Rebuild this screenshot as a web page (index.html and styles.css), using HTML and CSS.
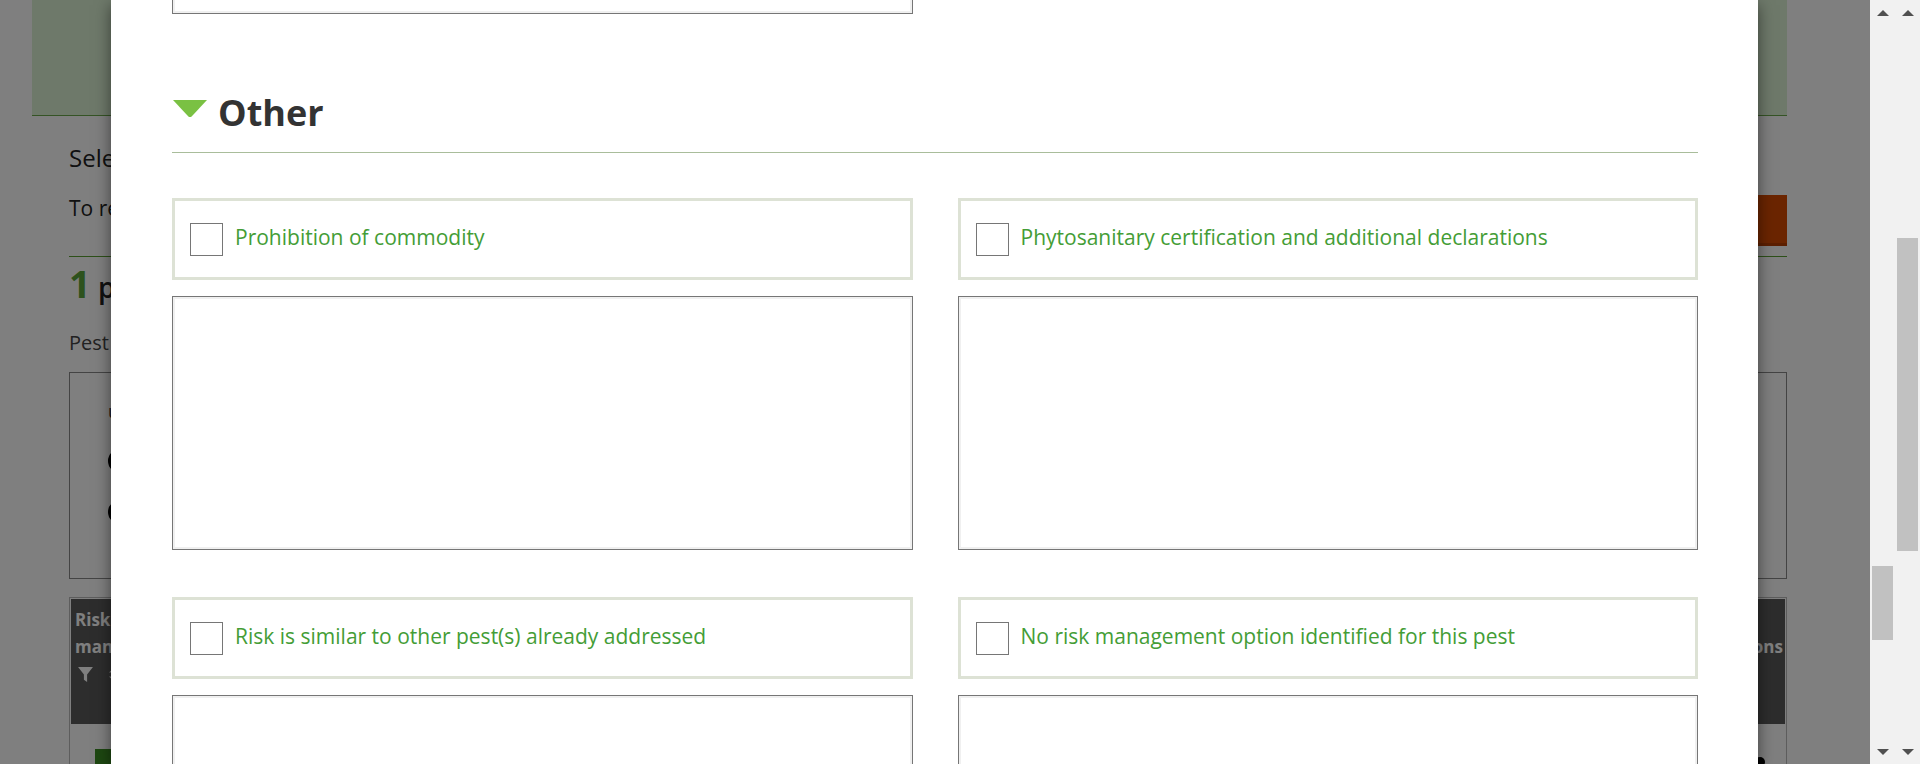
FILE: index.html
```html
<!DOCTYPE html>
<html lang="en">
<head>
<meta charset="utf-8">
<title>Risk management options</title>
<link rel="stylesheet" href="styles.css">
</head>
<body>
<div class="viewport">
  <div class="page-area">
    <div class="page">
      <div class="banner"></div>
      <div class="content">
        <h3 class="select-title">Select risk management options</h3>
        <div class="intro-row">
          <p class="intro">To record risk management options for a pest, select it in the table below.</p>
          <button class="btn-orange">Export</button>
        </div>
        <div class="count"><span class="count-num">1</span> pest selected</div>
        <p class="pest-label">Pest</p>
        <div class="filter-box">
          <p class="filter-text">use filter</p>
          <div class="radio-row"><span class="radio"></span> Commodity</div>
          <div class="radio-row"><span class="radio"></span> Commodity group</div>
        </div>
        <div class="table">
          <div class="thead">
            <div class="th th-left">
              <span>Risk management</span>
              <div class="th-icons">
                <svg width="17" height="17" viewBox="0 0 16 16"><path d="M1 1h14l-5.5 7v7l-3-2V8z" fill="#fff"/></svg>
                <svg width="14" height="17" viewBox="0 0 14 16"><path d="M7 0l6 6H1zM7 16l6-6H1z" fill="#fff"/></svg>
              </div>
            </div>
            <div class="th th-right"><span>Pest<br>actions</span></div>
          </div>
          <div class="tbody">
            <span class="row-mark"></span>
            <span class="row-dot"></span>
          </div>
        </div>
      </div>
    </div>
    <div class="overlay"></div>
    <div class="modal">
      <div class="modal-scroll">
        <div class="grid prev">
          <textarea class="notes"></textarea>
        </div>
        <h2 class="section-title">
          <svg class="caret" width="34" height="17" viewBox="0 0 34 17"><path d="M0 0H34L18.6 16.4Q17 17.6 15.4 16.4Z" fill="#7ac143"/></svg>
          <span>Other</span>
        </h2>
        <div class="grid">
          <div class="field">
            <label class="option"><span class="check"></span><span class="option-text">Prohibition of commodity</span></label>
            <textarea class="notes"></textarea>
          </div>
          <div class="field">
            <label class="option"><span class="check"></span><span class="option-text">Phytosanitary certification and additional declarations</span></label>
            <textarea class="notes"></textarea>
          </div>
          <div class="field">
            <label class="option"><span class="check"></span><span class="option-text">Risk is similar to other pest(s) already addressed</span></label>
            <textarea class="notes"></textarea>
          </div>
          <div class="field">
            <label class="option"><span class="check"></span><span class="option-text">No risk management option identified for this pest</span></label>
            <textarea class="notes"></textarea>
          </div>
        </div>
      </div>
    </div>
  </div>
  <div class="scrollbar">
    <div class="sb-btn"><span class="arrow-up"></span></div>
    <div class="sb-track"><div class="sb-thumb thumb-inner"></div></div>
    <div class="sb-btn"><span class="arrow-down"></span></div>
  </div>
  <div class="scrollbar">
    <div class="sb-btn"><span class="arrow-up"></span></div>
    <div class="sb-track"><div class="sb-thumb thumb-outer"></div></div>
    <div class="sb-btn"><span class="arrow-down"></span></div>
  </div>
</div>
</body>
</html>
```
FILE: styles.css
```css
* { box-sizing: border-box; }
html, body { margin: 0; padding: 0; height: 100%; }
body {
  font-family: "Open Sans", "Noto Sans", sans-serif;
  overflow: hidden;
  background: #fff;
}
.viewport { display: flex; width: 1920px; height: 764px; }
.page-area { position: relative; flex: 1; overflow: hidden; }

/* background page */
.page { width: 100%; height: 100%; background: #fff; }
.banner {
  margin: 0 83px 0 32px;
  height: 116px;
  background: #dcf2d4;
  border-bottom: 1px solid #6aa84a;
}
.content { margin: 0 83px 0 69px; }
.select-title { margin: 26px 0 0; font-size: 24px; font-weight: 400; line-height: 32px; color: #222; }
.intro-row { display: flex; justify-content: space-between; align-items: flex-start; border-bottom: 1px solid #5aa033; height: 83px; }
.intro { margin: 20px 0 0; font-size: 21px; line-height: 28px; color: #222; }
.btn-orange {
  margin-top: 21px; width: 160px; height: 51px; border: 0;
  background: #d64a00; box-shadow: inset 0 -3px 0 #b83e00; color: #fff;
  font: 600 18px "Open Sans", sans-serif;
}
.count { margin-top: 4px; font-size: 28px; font-weight: 600; color: #222; line-height: 44px; }
.count-num { font-size: 38px; font-weight: 700; color: #5aa53a; }
.pest-label { margin: 20px 0 0; font-size: 20px; line-height: 28px; color: #444; }
.filter-box { margin-top: 15px; height: 207px; border: 1px solid #888; padding: 26px 38px; }
.filter-text { margin: 0; font-size: 18px; color: #333; }
.radio-row { display: flex; align-items: center; gap: 10px; margin-top: 24px; font-size: 20px; color: #222; }
.radio { width: 24px; height: 24px; border-radius: 50%; border: 3px solid #000; }
.table { margin-top: 18px; border: 1px solid #bbb; border-bottom: 0; padding: 1px 1px 0; height: 200px; }
.thead { display: flex; justify-content: space-between; height: 125px; background: #5b5b5b; }
.th { color: #fff; font-weight: 700; font-size: 17px; line-height: 27px; padding: 7px 4px; }
.th-left { width: 110px; }
.th-right { padding-right: 2px; }
.th-icons { display: flex; gap: 14px; margin-top: 6px; padding-left: 2px; }
.tbody { position: relative; height: 60px; }
.row-mark { position: absolute; left: 24px; top: 25px; width: 40px; height: 20px; background: #3a8f22; }
.row-dot { position: absolute; right: 20px; top: 33px; width: 10px; height: 10px; border-radius: 50%; background: #000; }

.overlay { position: absolute; inset: 0; background: rgba(0, 0, 0, 0.5); }

/* modal */
.modal {
  position: absolute; top: 0; left: 111px; width: 1647px; height: 100%;
  background: #fff;
  box-shadow: 0 5px 15px rgba(0, 0, 0, 0.5);
  overflow: hidden;
}
.modal-scroll { padding: 0 60px 0 61px; margin-top: -240px; }
.grid { display: grid; grid-template-columns: 1fr 1fr; column-gap: 45px; row-gap: 47px; }
.notes {
  display: block; width: 100%; height: 254px; margin: 0; resize: none;
  border: 1px solid #767676; border-radius: 0;
  box-shadow: inset 0 0 0 2px #f0f0f0;
  background: #fff;
}
.field .notes { margin-top: 16px; }
.section-title {
  display: flex; align-items: flex-start; gap: 11px;
  margin: 74px 0 0; padding: 0 0 15px 1px;
  border-bottom: 1px solid #a9bd9b;
  font-size: 36px; font-weight: 700; line-height: 49px; color: #333;
}
.caret { margin-top: 12px; flex: none; }
.grid:not(.prev) { margin-top: 45px; }
.option {
  display: flex; align-items: center; gap: 12px;
  height: 82px; padding: 0 15px;
  border: 3px solid #dde2d5;
  color: #449d36; font-size: 21px;
}
.check { width: 33px; height: 33px; border: 1px solid #767676; background: #fff; flex: none; }
.option-text { line-height: 28px; margin-top: -4px; }

/* scrollbars */
.scrollbar { width: 25px; height: 100%; background: #f1f1f1; display: flex; flex-direction: column; }
.sb-btn { height: 25px; display: flex; align-items: center; justify-content: center; }
.arrow-up { width: 0; height: 0; border-left: 6px solid transparent; border-right: 6px solid transparent; border-bottom: 6px solid #505050; }
.arrow-down { width: 0; height: 0; border-left: 6px solid transparent; border-right: 6px solid transparent; border-top: 6px solid #505050; }
.sb-track { flex: 1; padding: 0 2px; }
.sb-thumb { background: #c1c1c1; }
.thumb-inner { margin-top: 541px; height: 74px; }
.thumb-outer { margin-top: 213px; height: 313px; }
```
